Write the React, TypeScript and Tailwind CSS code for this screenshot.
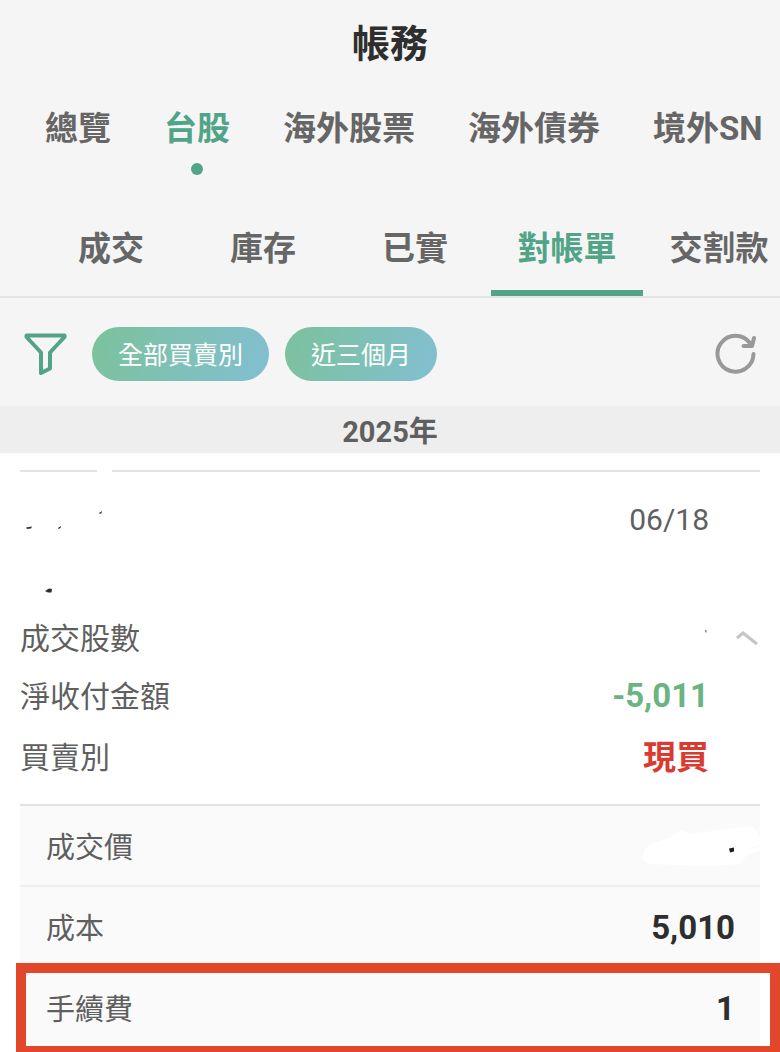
import type { ReactNode } from 'react'

const MARKETS = ['總覽', '台股', '海外股票', '海外債券', '境外SN']
const VIEWS = ['成交', '庫存', '已實', '對帳單', '交割款']
const FILTERS = ['全部買賣別', '近三個月']

function MarketTabs({ active }: { active: string }) {
  return (
    <nav className="flex gap-[53px] overflow-hidden pt-[18px] pb-[25px] pl-[45px]">
      {MARKETS.map((name) => (
        <button
          key={name}
          type="button"
          className={`flex shrink-0 flex-col items-center gap-[9px] text-[33px] leading-[50px] font-bold ${
            active === name ? 'text-[#52a488]' : 'text-[#666666]'
          }`}
        >
          {name}
          <span className={`size-3 rounded-full ${active === name ? 'bg-[#52a488]' : 'bg-transparent'}`} />
        </button>
      ))}
    </nav>
  )
}

function ViewTabs({ active }: { active: string }) {
  return (
    <nav className="flex overflow-hidden border-b-2 border-[#e3e3e3] pl-[35px]">
      {VIEWS.map((name) => (
        <button
          key={name}
          type="button"
          className={`h-24 w-[152px] shrink-0 border-b-[6px] pt-2 text-[33px] font-bold ${
            active === name ? 'border-[#52a488] text-[#52a488]' : 'border-transparent text-[#666666]'
          }`}
        >
          {name}
        </button>
      ))}
    </nav>
  )
}

function FilterBar() {
  return (
    <div className="flex items-center pt-[29px] pr-6 pb-[25px] pl-6">
      <button type="button" aria-label="篩選">
        <svg width="43" height="44" viewBox="0 0 43 44" fill="none" stroke="#52a488" strokeWidth="4" strokeLinejoin="round">
          <path d="M2.5 3.5H40.5V5L26 20.5V36.5L17 41V20.5L2.5 5Z" />
        </svg>
      </button>
      <div className="ml-[25px] flex gap-4">
        {FILTERS.map((name) => (
          <button
            key={name}
            type="button"
            className="h-[54px] rounded-full bg-linear-[110deg] from-[#7bc29b] to-[#82bfd2] px-[26px] pt-1 text-[25px] text-white"
          >
            {name}
          </button>
        ))}
      </div>
      <button type="button" aria-label="重新整理" className="ml-auto">
        <svg width="41" height="44" viewBox="0 0 41 44" fill="none" stroke="#999999" strokeWidth="4" strokeLinecap="round" strokeLinejoin="round">
          <path d="M38.5 22A18 18 0 1 1 35 11" />
          <path d="M28.5 14H37L39 6" />
        </svg>
      </button>
    </div>
  )
}

function SummaryRow({ label, children, className }: { label: ReactNode; children?: ReactNode; className: string }) {
  return (
    <div className={`flex items-center justify-between text-[30px] text-[#5f5f5f] ${className}`}>
      <dt>{label}</dt>
      <dd className="flex items-center">{children}</dd>
    </div>
  )
}

function DetailRow({ label, children }: { label: string; children: ReactNode }) {
  return (
    <div className="flex h-[81px] items-center justify-between border-t-2 border-[#eeeeee] bg-[#fafafa] pt-[3px] pr-[25px] pl-[26px] first:border-[#e3e3e3]">
      <dt className="pt-1 text-[29px] text-[#5f5f5f]">{label}</dt>
      <dd className="text-[33px] font-bold text-[#2e2e2e]">{children}</dd>
    </div>
  )
}

export default function App() {
  return (
    <main className="overflow-hidden bg-white font-['Roboto','Noto_Sans_CJK_TC',sans-serif]">
      <header className="bg-[#f5f5f5]">
        <h1 className="h-[86px] text-center text-[38px] leading-[88px] font-bold text-[#2e2e2e]">帳務</h1>
        <MarketTabs active="台股" />
        <ViewTabs active="對帳單" />
        <FilterBar />
      </header>

      <h2 className="h-[47px] bg-[#eeeeee] text-center text-[29px] leading-[53px] font-bold text-[#5f5f5f]">2025年</h2>

      <section className="px-5 pt-[17px] pb-[5px]">
        <div className="flex gap-[15px]">
          <span className="h-[2px] w-[77px] bg-[#e3e3e3]" />
          <span className="h-[2px] flex-1 bg-[#e3e3e3]" />
        </div>
        <dl className="pb-5">
          <SummaryRow
            className="h-[94px] pr-[51px]"
            label={
              <svg width="100" height="30" viewBox="0 0 100 30" fill="#2e2e2e" aria-hidden>
                <path d="M6 23.5L12 22.5L11 24.5L7 25Z" />
                <path d="M38 24L41 22L40.5 24L38.5 25Z" />
                <path d="M79 9L82 7L81.5 9L80 10Z" />
              </svg>
            }
          >
            06/18
          </SummaryRow>
          <SummaryRow
            className="h-[48px] pr-[51px]"
            label={
              <svg width="100" height="30" viewBox="0 0 100 30" fill="#2e2e2e" aria-hidden>
                <path d="M25 16L29 13.5L32 14L31.5 17.5L28 17.5Z" />
              </svg>
            }
          />
          <SummaryRow className="h-[48px]" label="成交股數">
            <svg width="6" height="16" viewBox="0 0 6 16" fill="#777777" className="mr-[25px]" aria-hidden>
              <path d="M2 0H3.5V2.5H2.5Z" />
            </svg>
            <button type="button" aria-label="收合">
              <svg width="26" height="20" viewBox="0 0 26 20" fill="none" stroke="#c4c4c4" strokeWidth="3">
                <path d="M3 10L9 5L23 16" />
              </svg>
            </button>
          </SummaryRow>
          <SummaryRow className="h-[68px] pr-[51px]" label="淨收付金額">
            <span className="text-[33px] font-bold text-[#6ab47f]">-5,011</span>
          </SummaryRow>
          <SummaryRow className="h-[54px] pr-[51px]" label="買賣別">
            <span className="pt-[2px] text-[33px] font-bold text-[#d93a32]">現買</span>
          </SummaryRow>
        </dl>

        <dl>
          <DetailRow label="成交價">
            {/* value is masked out, only a smudge is left */}
            <svg width="120" height="50" viewBox="0 0 120 50" className="-mr-[25px]" aria-hidden>
              <path d="M4 28L10 22L30 16L42 8L50 12L80 8L112 4L117 10L120 14V22L106 27L120 25V29L106 34L100 42L70 44L8 42L2 37Z" fill="#ffffff" />
              <path d="M89 26.5L94 25.5V29.5L90 30.5Z" fill="#1f1f1f" />
            </svg>
          </DetailRow>
          <DetailRow label="成本">5,010</DetailRow>
          <div className="relative">
            <DetailRow label="手續費">1</DetailRow>
            <div className="pointer-events-none absolute -top-[3px] -right-5 -bottom-[9px] -left-1 border-10 border-[#e2472b]" />
          </div>
        </dl>
      </section>
    </main>
  )
}
